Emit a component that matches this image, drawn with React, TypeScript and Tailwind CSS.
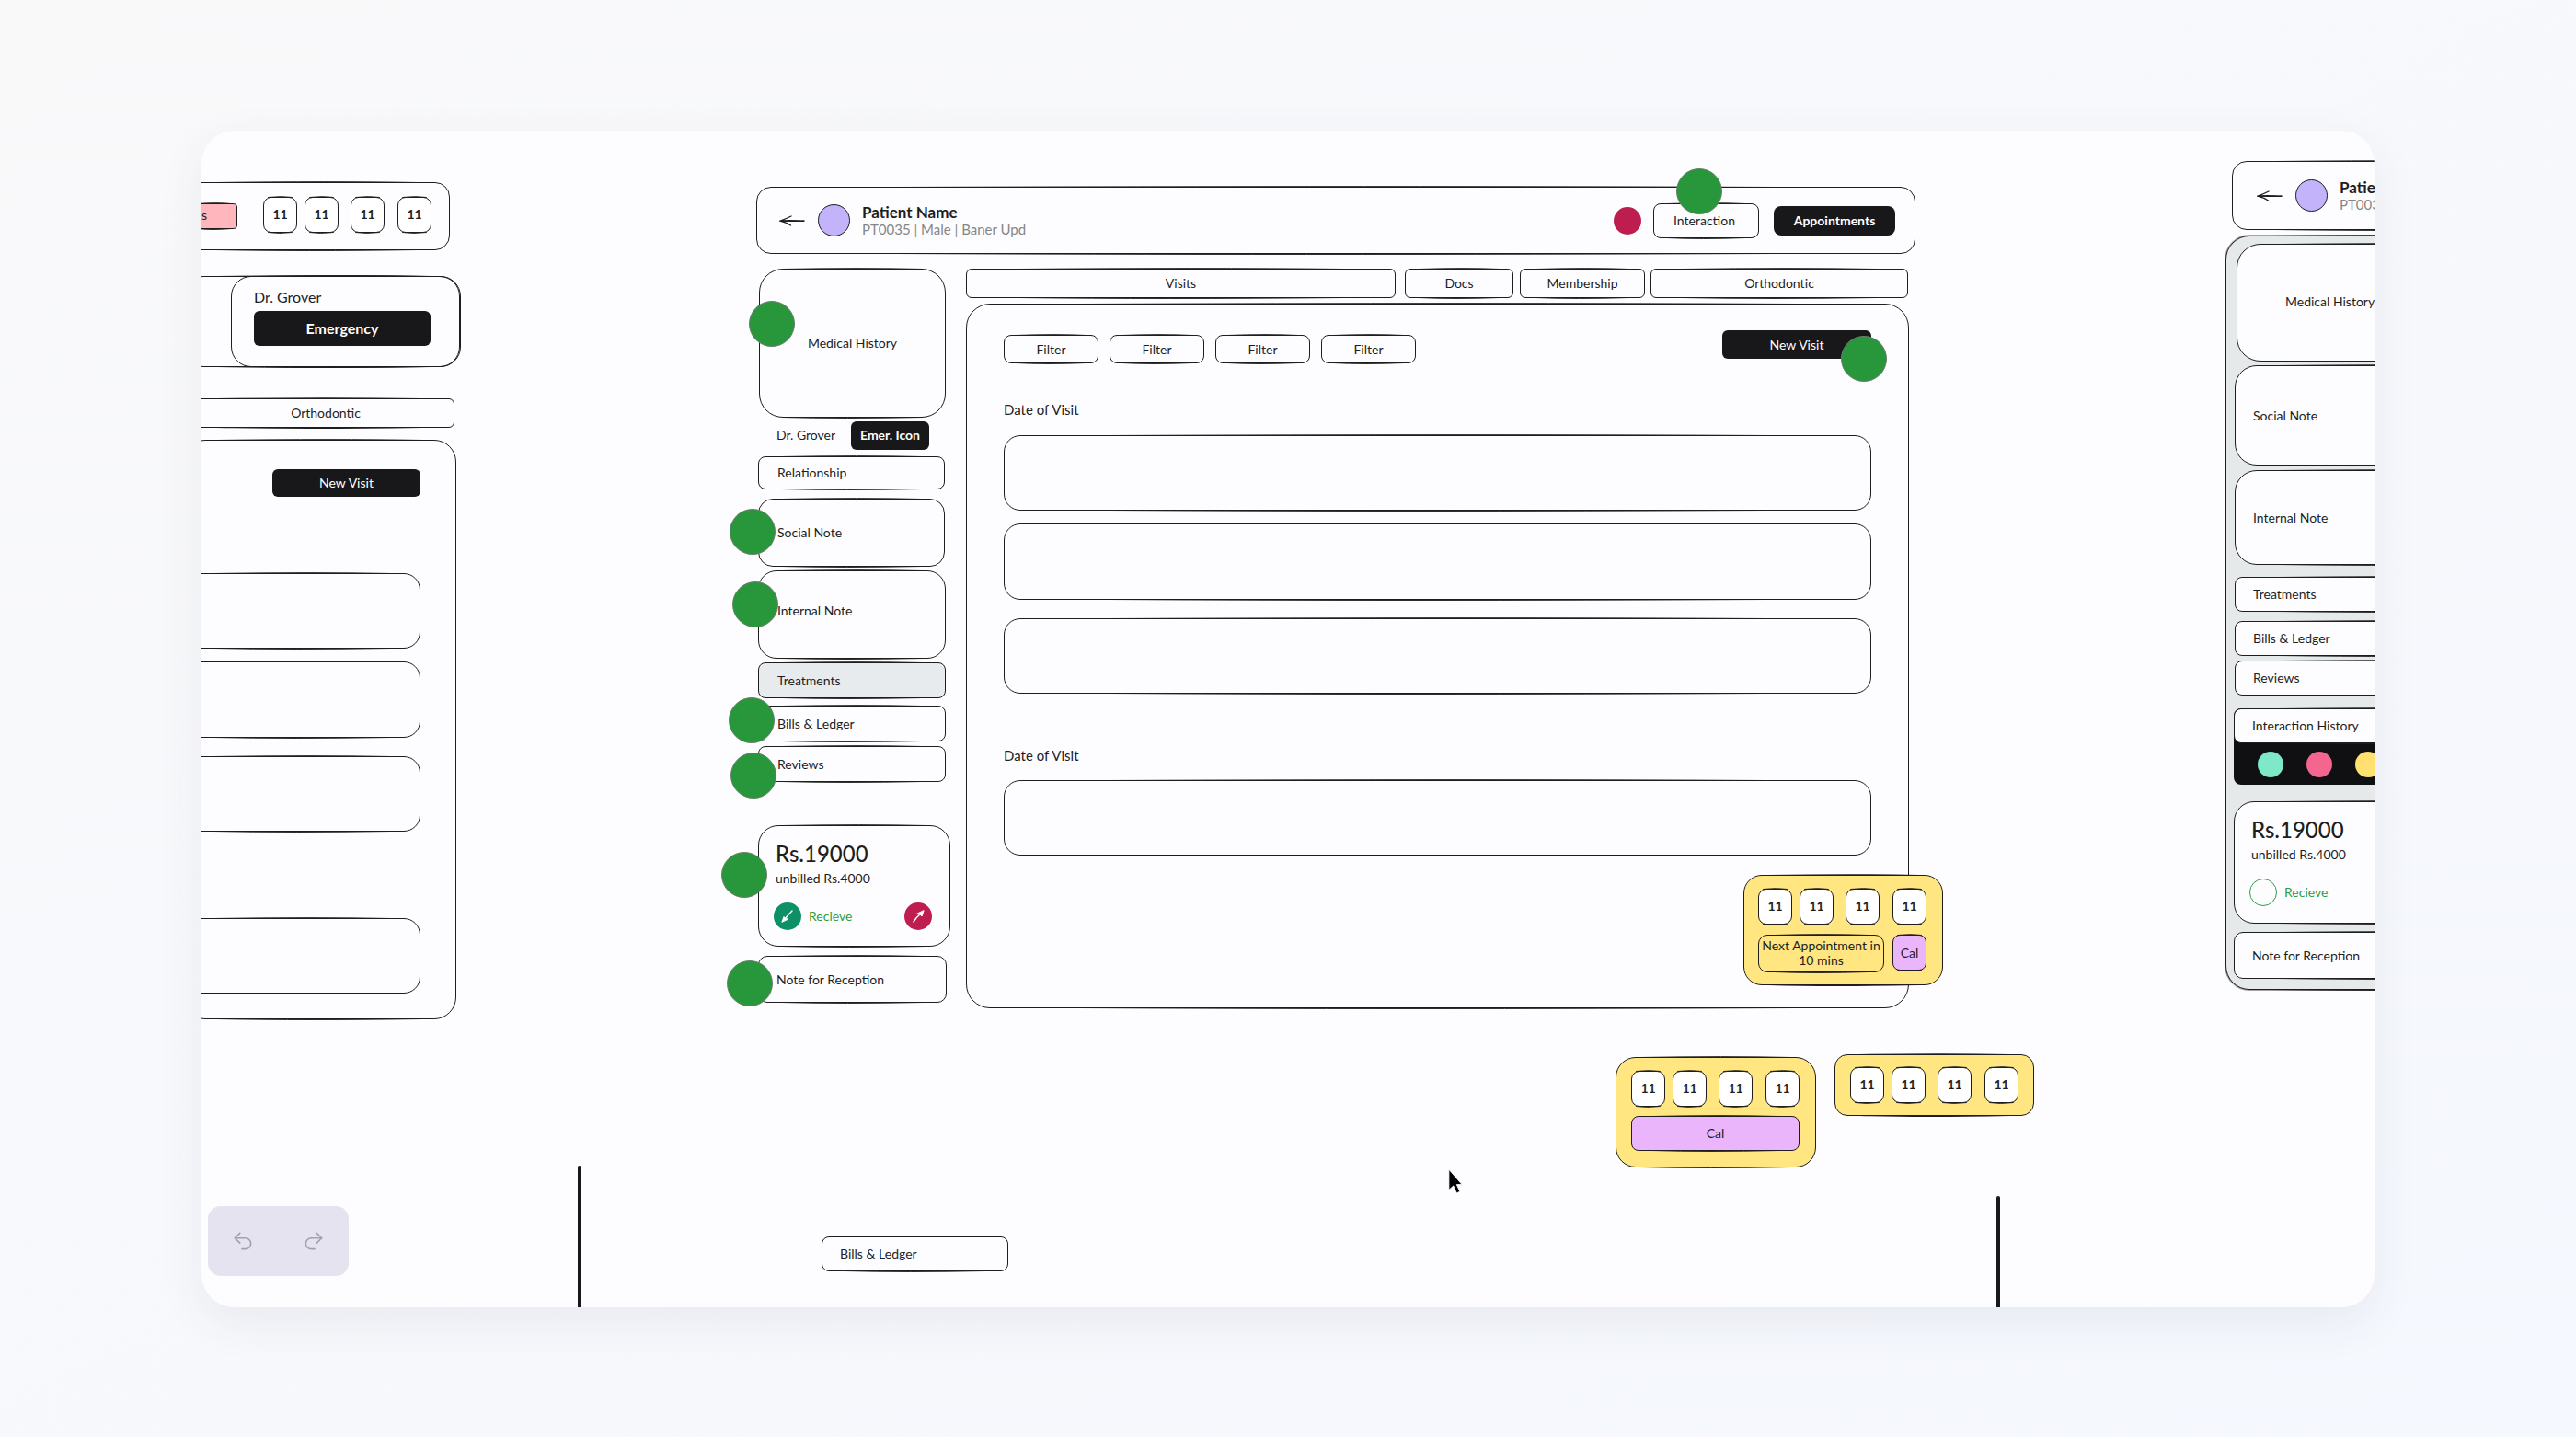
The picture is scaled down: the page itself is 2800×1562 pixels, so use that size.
import { Redo2, Undo2 } from 'lucide-react'
import type { ReactNode } from 'react'

type BoxProps = {
  as?: 'div' | 'button'
  className?: string
  children?: ReactNode
}

// The second, slightly bowed pen stroke along the top and bottom edges
function PenStroke({ flip }: { flip?: boolean }) {
  return (
    <svg
      className={`pointer-events-none absolute left-0 h-1 w-full ${flip ? '-bottom-[3px]' : '-top-[3px]'}`}
      viewBox="0 0 100 4"
      preserveAspectRatio="none"
      fill="none"
      aria-hidden="true"
    >
      <path
        d={flip ? 'M12 1.5 Q 45 3.4 88 1.5' : 'M12 2.5 Q 55 0.8 88 2.5'}
        stroke="#1e1e1e"
        strokeWidth="1"
        vectorEffect="non-scaling-stroke"
      />
    </svg>
  )
}

function Box({ as: Tag = 'div', className = '', children }: BoxProps) {
  return (
    <Tag className={`relative shrink-0 border border-[#1e1e1e] ${className}`}>
      <PenStroke />
      {children}
      <PenStroke flip />
    </Tag>
  )
}

function Dot({ className }: { className: string }) {
  return <span className={`absolute z-10 size-[50px] rounded-full border border-[#6a7f6c] bg-[#28963a] ${className}`} />
}

function BackArrow() {
  return (
    <svg width="28" height="14" viewBox="0 0 28 14" fill="none" stroke="#1e1e1e" strokeWidth="1.3" strokeLinecap="round">
      <path d="M27 7.3 Q 14 6.4 2 7 M27 7 L1 7.4 M13 2 Q 7 5 1 7.2 Q 8 9 12.500 12" />
    </svg>
  )
}

function Patient() {
  return (
    <>
      <button aria-label="Back" className="shrink-0">
        <BackArrow />
      </button>
      <span className="ml-[14px] size-[35px] shrink-0 rounded-full border border-[#1e1e1e] bg-[#c2b3fb]" />
      <div className="ml-[13px] whitespace-nowrap">
        <h1 className="text-[17px] leading-[18px] font-bold">Patient Name</h1>
        <p className="text-[15px] leading-[18px] text-[#868686]">PT0035 | Male | Baner Upd</p>
      </div>
    </>
  )
}

function Slots({ className = '' }: { className?: string }) {
  return (
    <div className={`flex ${className}`}>
      {['mr-2', 'mr-[13px]', 'mr-[14px]', ''].map((gap, i) => (
        <Box key={i} as="button" className={`h-[39px] w-[37px] rounded-[9px] bg-white pb-px text-sm font-bold ${gap}`}>
          11
        </Box>
      ))}
    </div>
  )
}

function Receive({ outlined }: { outlined?: boolean }) {
  return (
    <div className="flex items-center">
      <button aria-label="Receive payment" className={`flex size-[30px] items-center justify-center rounded-full ${outlined ? 'border border-[#2f9e44]' : 'bg-[#0d9065]'}`}>
        {!outlined && (
          <svg width="16" height="16" viewBox="0 0 16 16" fill="white" stroke="white" strokeLinecap="round">
            <path d="M13 2 Q 9 6 5 11" strokeWidth="1.500" />
            <path d="M2 14 L4 8.500 L5.500 10.500 L8.500 11 Z" />
          </svg>
        )}
      </button>
      <span className="ml-2 text-sm text-[#2f9e44]">Recieve</span>
      {!outlined && (
        <button aria-label="Send payment" className="ml-auto flex size-[30px] items-center justify-center rounded-full bg-[#be1d50]">
          <svg width="16" height="16" viewBox="0 0 16 16" fill="white" stroke="white" strokeLinecap="round">
            <path d="M3 14 Q 6 9 10 6" strokeWidth="1.500" />
            <path d="M14 2 L12 8 L10 6 L6.500 5.500 Z" />
          </svg>
        </button>
      )}
    </div>
  )
}

function Balance({ className, outlined }: { className: string; outlined?: boolean }) {
  return (
    <Box className={`flex flex-col rounded-[22px] bg-[#fdfdff] pr-[19px] pl-4 ${className}`}>
      <strong className="mt-[15px] pl-[2px] text-2xl leading-[30px] font-medium">Rs.19000</strong>
      <span className="mb-[14px] pl-[2px] text-sm leading-6">unbilled Rs.4000</span>
      <Receive outlined={outlined} />
    </Box>
  )
}

function LeftBoard() {
  return (
    <section className="absolute top-[56px] left-0 w-[283px]">
      <Box className="-ml-5 flex h-[74px] w-[290px] items-center rounded-[16px] pl-2">
        <Box className="h-[28px] w-[50px] rounded-[4px] bg-[#ffb6bd] pr-[32px] text-right text-sm leading-6">s</Box>
        <Slots className="-mt-1 ml-[28px]" />
      </Box>
      <Box className="mt-[28px] -ml-5 flex h-[99px] w-[302px] justify-end rounded-[22px]">
        <Box className="-my-px flex w-[249px] flex-col rounded-[22px] pr-[31px] pl-[24px]">
          <span className="mt-[10px] text-base leading-6">Dr. Grover</span>
          <button className="mt-[3px] h-[38px] rounded-md bg-[#18181b] text-base font-bold text-white">Emergency</button>
        </Box>
      </Box>
      <Box as="button" className="mt-[34px] -ml-5 block h-[32px] w-[295px] rounded-md pl-[15px] text-sm">Orthodontic</Box>
      <Box className="mt-[13px] -ml-5 h-[630px] w-[297px] rounded-[24px] pr-[38px]">
        <button className="mt-[31px] ml-auto block h-[30px] w-[161px] rounded-md bg-[#18181b] text-sm text-white">New Visit</button>
        <Box className="mt-[83px] h-[82px] rounded-r-[18px]" />
        <Box className="mt-[14px] h-[83px] rounded-r-[18px]" />
        <Box className="mt-[20px] h-[82px] rounded-r-[18px]" />
        <Box className="mt-[94px] h-[82px] rounded-r-[18px]" />
      </Box>
    </section>
  )
}

function Sidebar() {
  return (
    <aside className="flex w-[209px] flex-col text-sm">
      <Box className="ml-px flex h-[162px] w-[203px] items-center justify-center rounded-[26px]">Medical History</Box>
      <div className="mt-[3px] flex h-[32px] items-center justify-between pr-[23px] pl-5">
        <span>Dr. Grover</span>
        <button className="h-[31px] w-[85px] rounded-md bg-[#18181b] font-bold text-white">Emer. Icon</button>
      </div>
      <Box as="button" className="mt-[7px] h-[36px] w-[203px] rounded-lg pl-5 text-left">Relationship</Box>
      <Box as="button" className="mt-[10px] h-[74px] w-[203px] rounded-[16px] pl-5 text-left">Social Note</Box>
      <Box as="button" className="mt-[4px] h-[96px] w-[204px] rounded-[20px] pb-2 pl-5 text-left">Internal Note</Box>
      <Box as="button" className="mt-[4px] h-[39px] w-[204px] rounded-lg bg-[#e8ebee] pl-5 text-left">Treatments</Box>
      <Box as="button" className="mt-[8px] h-[39px] w-[204px] rounded-lg pl-5 text-left">Bills &amp; Ledger</Box>
      <Box as="button" className="mt-[5px] h-[39px] w-[204px] rounded-lg pl-5 text-left">Reviews</Box>
      <Balance className="mt-[47px] h-[132px]" />
      <Box as="button" className="mt-[10px] h-[51px] w-[205px] rounded-[10px] pl-[19px] text-left">Note for Reception</Box>
    </aside>
  )
}

function Visits() {
  return (
    <div className="flex-1">
      <nav className="flex h-[32px] items-stretch text-sm">
        <Box as="button" className="w-[467px] rounded-md">Visits</Box>
        <Box as="button" className="ml-[10px] w-[118px] rounded-md">Docs</Box>
        <Box as="button" className="ml-[7px] w-[136px] rounded-md">Membership</Box>
        <Box as="button" className="ml-[6px] w-[280px] rounded-md">Orthodontic</Box>
      </nav>
      <Box className="mt-[6px] h-[766px] rounded-[26px] px-10 text-[15px]">
        <div className="flex pt-[28px]">
          <div className="mt-[5px] flex gap-[12px] text-sm">
            {[1, 2, 3, 4].map((n) => (
              <Box key={n} as="button" className="h-[31px] w-[103px] rounded-lg">Filter</Box>
            ))}
          </div>
          <button className="ml-auto h-[31px] w-[162px] rounded-md bg-[#18181b] text-sm text-white">New Visit</button>
        </div>
        <h2 className="mt-[40px] leading-5">Date of Visit</h2>
        <Box className="mt-[18px] h-[82px] rounded-[18px]" />
        <Box className="mt-[14px] h-[83px] rounded-[18px]" />
        <Box className="mt-[20px] h-[82px] rounded-[18px]" />
        <h2 className="mt-[57px] leading-5">Date of Visit</h2>
        <Box className="mt-[17px] h-[82px] rounded-[18px]" />
      </Box>
    </div>
  )
}

function CenterBoard() {
  return (
    <section className="absolute top-[61px] left-[603px] w-[1260px]">
      <Box className="flex h-[73px] items-center rounded-[16px] pr-[21px] pl-[24px]">
        <Patient />
        <span className="ml-auto size-[30px] rounded-full bg-[#be1d50]" />
        <Box as="button" className="ml-[13px] h-[38px] w-[115px] rounded-lg pr-1 text-sm">Interaction</Box>
        <button className="ml-[16px] h-[32px] w-[132px] rounded-lg bg-[#18181b] text-sm font-bold text-white">Appointments</button>
      </Box>
      <div className="mt-[16px] mr-[7px] ml-[2px] flex gap-[17px]">
        <Sidebar />
        <Visits />
      </div>
      {/* review markers pinned on the board */}
      <Dot className="top-[124px] -left-[8px]" />
      <Dot className="top-[350px] -left-[29px]" />
      <Dot className="top-[429px] -left-[26px]" />
      <Dot className="top-[555px] -left-[30px]" />
      <Dot className="top-[615px] -left-[28px]" />
      <Dot className="top-[723px] -left-[38px]" />
      <Dot className="top-[841px] -left-[32px]" />
      <Dot className="-top-[20px] left-[1000px]" />
      <Dot className="top-[162px] left-[1179px]" />
    </section>
  )
}

function RightBoard() {
  return (
    <section className="absolute top-[33px] left-[2200px] w-[400px] text-sm">
      <Box className="ml-[7px] flex h-[75px] items-center rounded-[16px] pl-[26px]">
        <Patient />
      </Box>
      <Box className="mt-[6px] flex h-[820px] flex-col rounded-[26px] bg-[#e6e9ea] pl-[9px] ring-1 ring-[#1e1e1e]/40">
        <Box className="mt-[8px] ml-[2px] h-[128px] rounded-[26px] bg-[#fdfdff] pl-[52px] leading-[124px]">Medical History</Box>
        <Box as="button" className="mt-[4px] h-[109px] rounded-[24px] bg-[#fdfdff] pl-[19px] text-left">Social Note</Box>
        <Box as="button" className="mt-[5px] h-[103px] rounded-[24px] bg-[#fdfdff] pl-[19px] text-left">Internal Note</Box>
        <Box as="button" className="mt-[13px] h-[38px] rounded-lg bg-[#fdfdff] pl-[19px] text-left">Treatments</Box>
        <Box as="button" className="mt-[10px] h-[38px] rounded-lg bg-[#fdfdff] pl-[19px] text-left">Bills &amp; Ledger</Box>
        <Box as="button" className="mt-[5px] h-[38px] rounded-lg bg-[#fdfdff] pl-[19px] text-left">Reviews</Box>
        <div className="mt-[14px] -ml-px shrink-0 rounded-lg bg-[#101012]">
          <Box as="button" className="block h-[38px] w-full rounded-lg bg-[#fdfdff] pl-[19px] text-left">Interaction History</Box>
          <div className="flex h-[45px] items-center gap-[25px] pl-[26px]">
            <span className="size-[28px] rounded-full bg-[#7ee8c8]" />
            <span className="size-[28px] rounded-full bg-[#f4658f]" />
            <span className="size-[28px] rounded-full bg-[#ffe070]" />
          </div>
        </div>
        <Balance outlined className="mt-[18px] -ml-px h-[133px]" />
        <Box as="button" className="mt-[9px] -ml-px h-[51px] rounded-[10px] bg-[#fdfdff] pl-[19px] text-left">Note for Reception</Box>
      </Box>
    </section>
  )
}

export default function App() {
  return (
    <div className="flex min-h-screen bg-linear-to-br from-[#f9f9fa] to-[#f5f8fe] px-[219px] pt-[142px] pb-[141px] font-[Excalifont,Lato,sans-serif] text-[#1e1e1e]">
      <main className="relative flex-1 overflow-hidden rounded-[36px] bg-[#fdfdff] shadow-[0_16px_50px_rgba(60,60,90,0.08)]">
        <LeftBoard />
        <CenterBoard />
        <RightBoard />

        <Box className="absolute! top-[809px] left-[1676px] w-[217px] rounded-[20px] bg-[#ffe680] px-[15px] pt-[14px] pb-[13px]">
          <Slots />
          <div className="mt-[11px] flex gap-[9px]">
            <Box className="h-[41px] w-[137px] rounded-[10px] pt-[3px] text-center text-sm leading-4 whitespace-nowrap">
              Next Appointment in
              <br />
              10 mins
            </Box>
            <Box as="button" className="h-[39px] w-[37px] rounded-lg bg-[#eab5fb] text-sm">Cal</Box>
          </div>
        </Box>

        <Box className="absolute! top-[1007px] left-[1537px] w-[218px] rounded-[22px] bg-[#ffe680] pt-[14px] pr-[17px] pb-[17px] pl-4">
          <Slots />
          <Box as="button" className="mt-[10px] block h-[38px] w-full rounded-lg bg-[#eab5fb] text-sm">Cal</Box>
        </Box>

        <Box className="absolute! top-[1004px] left-[1775px] w-[217px] rounded-[14px] bg-[#ffe680] px-4 py-[13px]">
          <Slots />
        </Box>

        <span className="absolute bottom-0 left-[409px] h-[154px] w-1 rounded-t-full bg-[#18181b]" />
        <span className="absolute bottom-0 left-[1951px] h-[121px] w-1 rounded-t-full bg-[#18181b]" />

        <Box as="button" className="absolute! top-[1202px] left-[674px] h-[38px] w-[203px] rounded-lg pl-[19px] text-left text-sm">Bills &amp; Ledger</Box>

        <div className="absolute bottom-[34px] left-[7px] flex h-[76px] w-[153px] items-center justify-around rounded-[14px] bg-[#e5e3ef] text-[#a3a1ae]">
          <button aria-label="Undo">
            <Undo2 size={26} strokeWidth={1.5} />
          </button>
          <button aria-label="Redo">
            <Redo2 size={26} strokeWidth={1.5} />
          </button>
        </div>

        <svg className="absolute top-[1128px] left-[1355px]" width="16" height="29" viewBox="0 0 18 32" aria-hidden="true">
          <path d="M1 1 V26 L6.500 21 L10.500 30 L14.500 28 L10.500 19.500 H17 Z" fill="#000" stroke="#fff" strokeWidth="1" />
        </svg>
      </main>
    </div>
  )
}
